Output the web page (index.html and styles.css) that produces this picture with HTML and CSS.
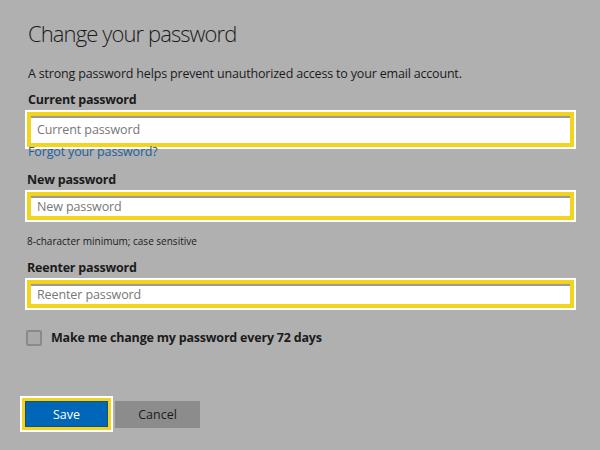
FILE: index.html
```html
<!DOCTYPE html>
<html lang="en">
<head>
    <meta charset="UTF-8">
    <meta name="viewport" content="width=device-width, initial-scale=1.0">
    <title>Change your password</title>
    <link rel="stylesheet" href="styles.css">
</head>
<body>
    <div class="page">
        <h1>Change your password</h1>
        <p class="intro">A strong password helps prevent unauthorized access to your email account.</p>

        <!-- current password -->
        <label class="label label-current" for="current">Current password</label>
        <div class="field field-tall">
            <input id="current" type="password" placeholder="Current password">
        </div>
        <a class="forgot" href="#">Forgot your password?</a>

        <!-- new password -->
        <label class="label label-new" for="new">New password</label>
        <div class="field">
            <input id="new" type="password" placeholder="New password">
        </div>
        <p class="hint">8-character minimum; case sensitive</p>

        <label class="label label-reenter" for="reenter">Reenter password</label>
        <div class="field">
            <input id="reenter" type="password" placeholder="Reenter password">
        </div>

        <label class="check">
            <span class="box"></span>
            <span>Make me change my password every 72 days</span>
        </label>

        <div class="buttons">
            <div class="save-wrap">
                <button class="btn save">Save</button>
            </div>
            <button class="btn cancel">Cancel</button>
        </div>
    </div>
</body>
</html>
```

FILE: styles.css
```css
body {
    margin: 0;
    background-color: #b0b0b0;
    font-family: "Open Sans", "Noto Sans", Arial, sans-serif;
    color: #1b1b1b;
}
.page {
    padding: 0 24px 0 25px;
}
h1 {
    margin: 0;
    padding-top: 18px;
    padding-left: 3px;
    font-size: 22px;
    font-weight: 300;
    line-height: 30px;
    letter-spacing: -0.9px;
}
.intro {
    margin: 18px 0 0 3px;
    font-size: 12.5px;
    line-height: 16px;
    letter-spacing: -0.18px;
}
.label {
    display: block;
    margin: 11px 0 0 3px;
    font-size: 12.5px;
    font-weight: 700;
    line-height: 16px;
    letter-spacing: -0.2px;
}
.label-current {
    margin-top: 10px;
}
.label-new,
.label-reenter {
    margin-top: 12px;
    margin-left: 2px;
}
.field {
    margin-top: 2px;
    border: 2px solid #fff;
    height: 28px;
    width: 547px;
}
.field-tall {
    height: 35px;
}
.field input {
    box-sizing: border-box;
    width: 100%;
    height: 100%;
    margin: 0;
    border: 4px solid #f2d41c;
    box-shadow: inset 0 2px 0 #9a9a9a;
    background: #fff;
    padding: 0 6px;
    font-family: inherit;
    font-size: 12.5px;
    letter-spacing: -0.1px;
    outline: none;
}
.field input::placeholder {
    color: #777;
}
.forgot {
    display: block;
    margin: -5px 0 0 3px;
    font-size: 12.5px;
    line-height: 16px;
    letter-spacing: -0.15px;
    color: #205e9c;
    text-decoration: none;
}
.hint {
    margin: 12px 0 0 2px;
    font-size: 10px;
    line-height: 14px;
}
.check {
    display: flex;
    align-items: center;
    gap: 9px;
    margin: 19px 0 0 1px;
    font-size: 12.5px;
    font-weight: 700;
    letter-spacing: -0.2px;
}
.box {
    box-sizing: border-box;
    width: 16px;
    height: 16px;
    border: 2px solid #8a8a8a;
    border-radius: 2px;
    background: #a9a9a9;
}
.buttons {
    display: flex;
    align-items: center;
    gap: 2px;
    margin: 50px 0 0 -5px;
}
.save-wrap {
    border: 2px solid #fff;
    background: #f2d41c;
    padding: 3px;
}
.btn {
    box-sizing: border-box;
    height: 27px;
    font-family: inherit;
    font-size: 12.5px;
    border: none;
    margin: 0;
}
.save {
    display: block;
    width: 83px;
    height: 26px;
    background: #0067b8;
    border: 1px solid #1a4f86;
    color: #fff;
}
.cancel {
    width: 85px;
    background: #8c8c8c;
    color: #1b1b1b;
}
```
